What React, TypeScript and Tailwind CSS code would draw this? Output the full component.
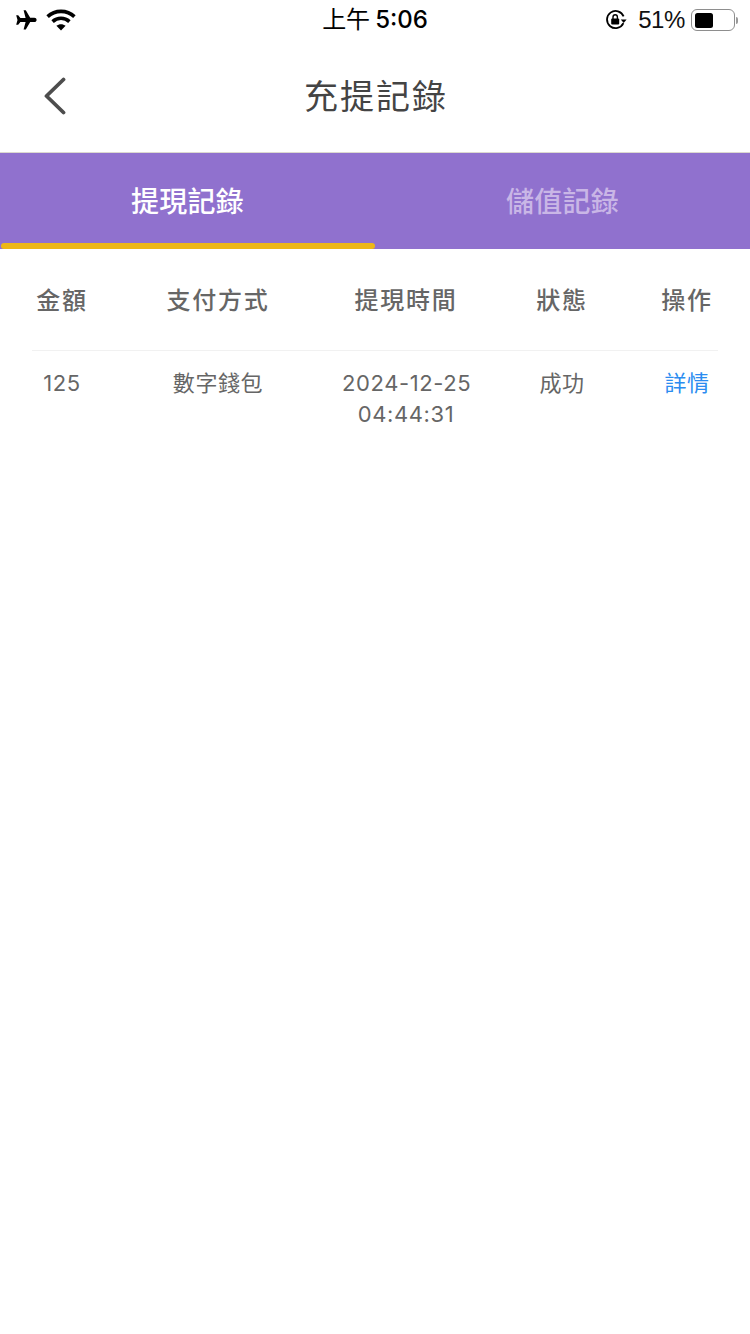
import { ReactNode } from "react";

const FONT = "font-['Liberation_Sans','Noto_Sans_CJK_TC',sans-serif]";

const COLUMNS = "grid grid-cols-[60px_250px_128px_186px_62px]";

function PlaneIcon() {
  return (
    <svg width="22" height="20" viewBox="0 0 22 20" fill="#000">
      <path d="M8.6 0.2h2.2l4.4 7.6h4.1c1.3 0 2.3 0.9 2.3 2.1s-1 2.1-2.3 2.1h-4.1l-4.4 7.6H8.6l2-7.6H5.4L3.2 14.7H1.2L2.5 10 1.2 5.3h2l2.2 2.6h5.2z" />
    </svg>
  );
}

function WifiIcon() {
  return (
    <svg width="30" height="22" viewBox="0 0 30 22" fill="none" stroke="#000" strokeWidth="3.6">
      <path d="M1.6 7.6C9 0.6 21 0.6 28.4 7.6" />
      <path d="M6.6 12.6C11.4 8.2 18.6 8.2 23.4 12.6" />
      <path d="M15 21.4l-4.6-4.6c2.6-2.2 6.6-2.2 9.2 0z" fill="#000" stroke="none" />
    </svg>
  );
}

function RotationLockIcon() {
  return (
    <svg width="22" height="22" viewBox="0 0 22 22" fill="none">
      <path d="M18.4 14.2A8.6 8.6 0 1 1 18.6 7.4" stroke="#000" strokeWidth="1.8" />
      <path d="M15.8 10.4h5.8l-2.9 3.6z" fill="#000" />
      <rect x="6.2" y="9.4" width="8" height="6" rx="1" fill="#000" />
      <path d="M8 10V8a2.2 2.2 0 0 1 4.4 0V10" stroke="#000" strokeWidth="1.4" />
    </svg>
  );
}

function BackIcon() {
  return (
    <svg width="24" height="38" viewBox="0 0 24 38" fill="none" stroke="#4d4d4d" strokeWidth="3.8" strokeLinecap="round" strokeLinejoin="round">
      <path d="M20.5 2.5L3.5 19l17 16.5" />
    </svg>
  );
}

function Battery() {
  return (
    <div className="flex items-center">
      <div className="w-[44px] h-[22px] rounded-[6px] border-[1.5px] border-[#8e8e8e] p-[2.5px]">
        <div className="w-[18px] h-full rounded-[2.5px] bg-black" />
      </div>
      <div className="w-[2px] h-[7px] ml-[1px] rounded-r-full bg-[#9a9a9a]" />
    </div>
  );
}

function StatusBar() {
  return (
    <div className="h-[40px] grid grid-cols-[1fr_auto_1fr] items-center text-black">
      <div className="flex items-center gap-[9px] pl-[15px]">
        <PlaneIcon />
        <WifiIcon />
      </div>
      <div className="flex items-center gap-[5px] leading-none">
        <span className="text-[24px]">上午</span>
        <span className="font-['Inter',sans-serif] text-[24px] font-medium">5:06</span>
      </div>
      <div className="flex items-center justify-end pr-[12px]">
        <RotationLockIcon />
        <span className="ml-[11px] mr-[6px] text-[24px] tracking-[-0.4px] leading-none text-[#111]">51%</span>
        <Battery />
      </div>
    </div>
  );
}

function Tab({ label, active }: { label: string; active?: boolean }) {
  return (
    <div className={`relative flex-1 flex items-center justify-center pt-[3px] text-[28px] tracking-[0.3px] font-medium ${active ? "text-white" : "text-[#c9b6e6]"}`}>
      {label}
      {active && <div className="absolute left-[1px] right-0 bottom-0 h-[6px] rounded-[3px] bg-[#edb716]" />}
    </div>
  );
}

function Cell({ children, className = "" }: { children: ReactNode; className?: string }) {
  return <div className={`text-center whitespace-nowrap ${className}`}>{children}</div>;
}

export default function App() {
  return (
    <div className={`w-[750px] min-h-[1334px] bg-white ${FONT}`}>
      <StatusBar />
      <header className="h-[113px] grid grid-cols-[1fr_auto_1fr] items-center border-b border-[#dcd9d0]">
        <div className="pl-[43px]">
          <BackIcon />
        </div>
        <h1 className="pt-[2px] pl-[2px] text-[34px] tracking-[2px] text-[#444] leading-none">充提記錄</h1>
      </header>

      <div className="flex h-[96px] bg-[#9071ce]">
        <Tab label="提現記錄" active />
        <Tab label="儲值記錄" />
      </div>

      <div className="mx-[32px]">
        <div className={`${COLUMNS} h-[102px] items-center pt-[2px] border-b border-[#f1f1f1] text-[24px] tracking-[1.8px] font-medium text-[#666]`}>
          <Cell>金額</Cell>
          <Cell className="pl-[2px]">支付方式</Cell>
          <Cell>提現時間</Cell>
          <Cell className="pr-[2px]">狀態</Cell>
          <Cell>操作</Cell>
        </div>
        <div className={`${COLUMNS} pt-[17px] text-[22px] leading-[31px] tracking-[0.6px] text-[#666]`}>
          <Cell className="font-['Inter',sans-serif] tracking-[0.6px]">125</Cell>
          <Cell className="pl-[2px]">數字錢包</Cell>
          <Cell className="font-['Inter',sans-serif] tracking-[0.6px]">
            2024-12-25
            <br />
            04:44:31
          </Cell>
          <Cell className="pr-[2px]">成功</Cell>
          <Cell className="text-[#2b8cf0]">詳情</Cell>
        </div>
      </div>
    </div>
  );
}
